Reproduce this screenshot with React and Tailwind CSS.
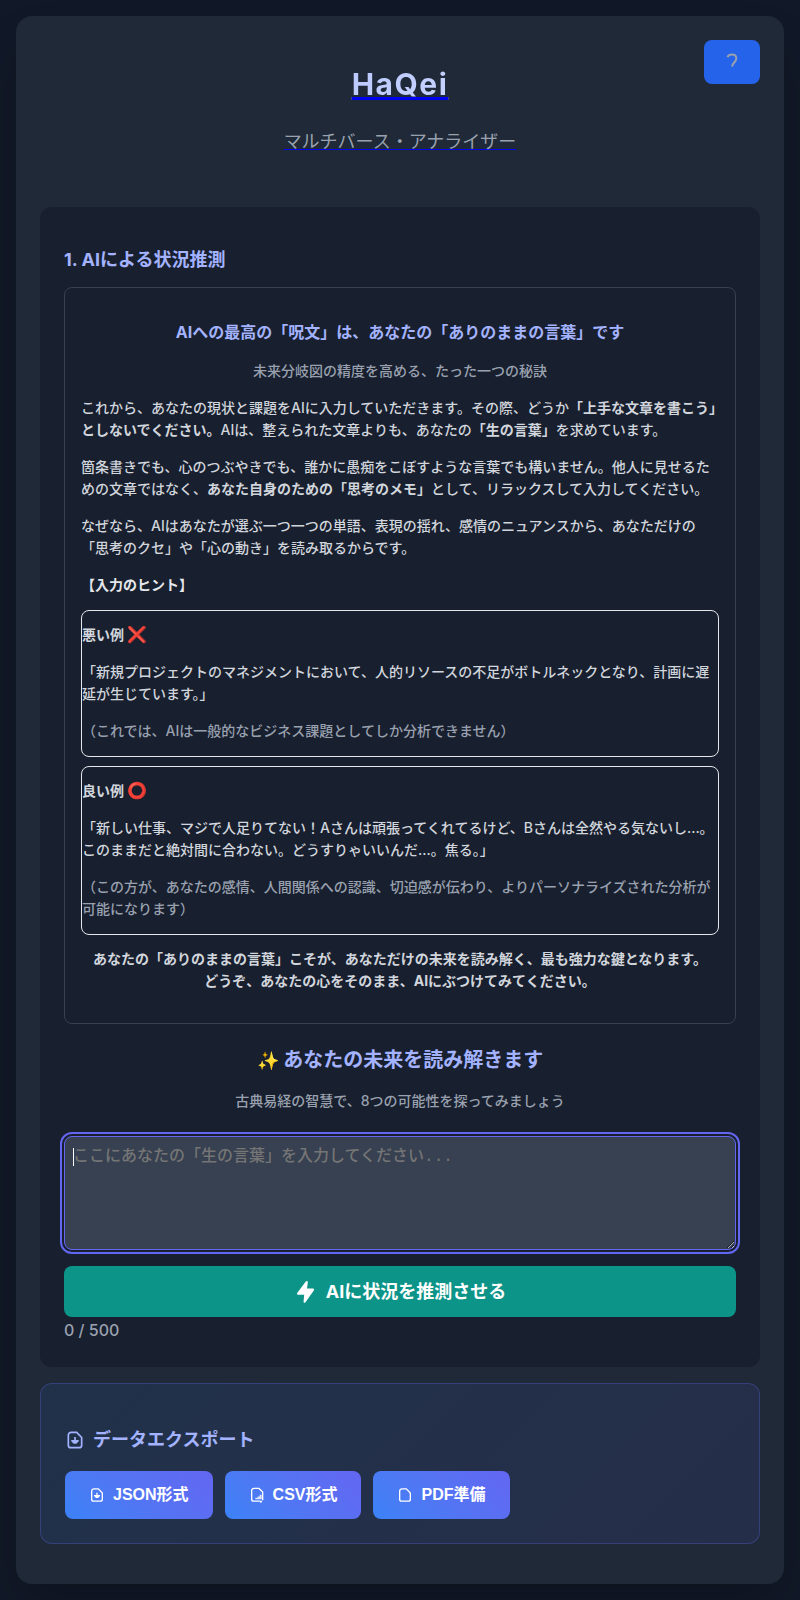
import { useRef, useEffect, useState } from "react";

function Icon({ className, children }) {
  return (
    <svg viewBox="0 0 24 24" fill="currentColor" aria-hidden="true" className={className}>
      {children}
    </svg>
  );
}

const OUTLINE = "M7.5 2.8H14L20 9V18.2a3 3 0 0 1-3 3H7a3 3 0 0 1-3-3v-12a3.400 3.400 0 0 1 3.500-3.400z";

function FileDown({ className }) {
  return (
    <Icon className={className}>
      <path d={OUTLINE} fill="none" stroke="currentColor" strokeWidth="2" />
      <path d="M11 8.500h2V12h3.500v1.500L13.500 16.500h-3L7.500 13.500V12H11z" />
    </Icon>
  );
}

function FileChart({ className }) {
  return (
    <Icon className={className}>
      <path d="M16 21.200H7a3 3 0 0 1-3-3V5.500a3.400 3.400 0 0 1 3.500-3.400H15L20.500 7.500V20" fill="none" stroke="currentColor" strokeWidth="2" />
      <path d="M9.500 18.500v-2.300h3.500v-2h3v-2.400h3v6.700z" fillOpacity="0.8" />
      <path d="M15.500 20.500h4.500l-1.500 3h-1.500z" />
    </Icon>
  );
}

function FileBlank({ className }) {
  return (
    <Icon className={className}>
      <path d={OUTLINE} fill="none" stroke="currentColor" strokeWidth="2" />
    </Icon>
  );
}

function Example({ title, mark, quote, note }) {
  return (
    <div className="flex flex-col gap-[15px] rounded-lg border border-gray-200 pt-[13px] pb-[14px]">
      <p className="font-bold">
        {title} <span className="text-base leading-none">{mark}</span>
      </p>
      <p>{quote}</p>
      <p className="text-gray-400">{note}</p>
    </div>
  );
}

function ExportButton({ icon, children }) {
  return (
    <button
      type="button"
      className="flex h-12 items-center gap-2 rounded-lg bg-linear-45 from-[#3b82f6] to-[#6366f1] px-6 font-['Liberation_Sans','Noto_Sans_CJK_JP',sans-serif] text-base font-bold text-white"
    >
      {icon}
      {children}
    </button>
  );
}

export default function App() {
  const input = useRef(null);
  const [text, setText] = useState("");
  useEffect(() => input.current.focus(), []);

  return (
    <div className="min-h-screen bg-[#111827] p-4 font-[Inter,'Noto_Sans_CJK_JP',sans-serif] text-gray-200">
      <main className="relative rounded-2xl bg-[#1f2937] px-6 pb-10 shadow-2xl">
        <button
          type="button"
          aria-label="ヘルプ"
          className="absolute top-6 right-6 flex h-11 w-14 items-center justify-center rounded-lg bg-[#2563eb] text-gray-400"
        >
          <svg viewBox="0 0 24 24" fill="none" stroke="currentColor" strokeWidth="2" aria-hidden="true" className="size-6">
            <path d="M7.500 7.200C8.300 5.300 10 4.600 12 4.600c2.800 0 4.300 1.500 4.300 3.800 0 3.300-3.800 4.300-4.300 8.200" />
          </svg>
        </button>

        <header className="pt-11 pb-[52px] text-center">
          <a href="/" className="block underline decoration-[#0000ee]">
            <h1 className="bg-linear-135 from-indigo-300 to-indigo-100 bg-clip-text text-3xl leading-[48px] font-bold tracking-wider text-transparent">
              HaQei
            </h1>
            <p className="mt-5 text-lg leading-[27px] text-gray-400">マルチバース・アナライザー</p>
          </a>
        </header>

        <section className="rounded-xl bg-[#181f2e] px-6 pt-[39px] pb-6">
          <h2 className="text-lg leading-7 font-bold text-indigo-300">1. AIによる状況推測</h2>

          <div className="mt-[13px] flex flex-col gap-[15px] rounded-lg border border-gray-700 px-4 pt-[31px] pb-[31px] text-sm leading-[22px] font-medium text-gray-300">
            <h3 className="text-center text-base leading-[26px] font-bold text-indigo-300">
              AIへの最高の「呪文」は、あなたの「ありのままの言葉」です
            </h3>
            <p className="text-center text-gray-400">未来分岐図の精度を高める、たった一つの秘訣</p>
            <p>
              これから、あなたの現状と課題をAIに入力していただきます。その際、どうか
              <strong>「上手な文章を書こう」としないでください。</strong>
              AIは、整えられた文章よりも、あなたの<strong>「生の言葉」</strong>を求めています。
            </p>
            <p>
              箇条書きでも、心のつぶやきでも、誰かに愚痴をこぼすような言葉でも構いません。他人に見せるための文章ではなく、
              <strong>あなた自身のための「思考のメモ」</strong>として、リラックスして入力してください。
            </p>
            <p>
              なぜなら、AIはあなたが選ぶ一つ一つの単語、表現の揺れ、感情のニュアンスから、あなただけの「思考のクセ」や「心の動き」を読み取るからです。
            </p>
            <div>
              <p className="font-bold text-gray-200">【入力のヒント】</p>
              <div className="mt-[14px] flex flex-col gap-[9px]">
                <Example
                  title="悪い例"
                  mark="❌"
                  quote="「新規プロジェクトのマネジメントにおいて、人的リソースの不足がボトルネックとなり、計画に遅延が生じています。」"
                  note="（これでは、AIは一般的なビジネス課題としてしか分析できません）"
                />
                <Example
                  title="良い例"
                  mark="⭕"
                  quote="「新しい仕事、マジで人足りてない！Aさんは頑張ってくれてるけど、Bさんは全然やる気ないし…。このままだと絶対間に合わない。どうすりゃいいんだ…。焦る。」"
                  note="（この方が、あなたの感情、人間関係への認識、切迫感が伝わり、よりパーソナライズされた分析が可能になります）"
                />
              </div>
              <p className="mt-[13px] text-center font-bold">
                あなたの「ありのままの言葉」こそが、あなただけの未来を読み解く、最も強力な鍵となります。
                <br />
                どうぞ、あなたの心をそのまま、AIにぶつけてみてください。
              </p>
            </div>
          </div>

          <label htmlFor="situation" className="mt-5 block text-center text-xl leading-8 font-bold text-indigo-300">
            <span className="text-lg leading-none">✨</span> あなたの未来を読み解きます
          </label>
          <p className="mt-[14px] text-center text-sm leading-[22px] font-medium text-gray-400">
            古典易経の智慧で、8つの可能性を探ってみましょう
          </p>
          <div className="relative mt-6">
            <textarea
              id="situation"
              ref={input}
              value={text}
              maxLength={500}
              onChange={(e) => setText(e.target.value)}
              placeholder="ここにあなたの「生の言葉」を入力してください..."
              className="block h-[114px] w-full rounded-lg border border-[#6366f1] bg-[#374151] p-2 font-['Liberation_Mono','Noto_Sans_CJK_JP',monospace] text-base font-medium text-gray-200 outline-2 outline-offset-2 outline-[#6366f1] placeholder:text-[#757575] placeholder-shown:caret-transparent"
            />
            {text === "" && (
              <span aria-hidden="true" className="pointer-events-none absolute top-3 left-[9px] h-[18px] w-px bg-white" />
            )}
          </div>
          <button
            type="button"
            className="mt-4 flex h-[51px] w-full items-center justify-center gap-2 rounded-lg bg-[#0d9488] text-lg font-bold text-white"
          >
            <Icon className="size-6">
              <path d="M11.600 1.700Q12.400.8 13.200 1.100 14 1.500 13.800 2.500L13 8.500h6Q20.800 8.800 19.800 10.400L11.500 22.200Q10.700 23.200 10 22.700 9.400 22.300 9.600 21.300L10.200 14.800H4Q2.300 14.500 3.200 12.900z" />
            </Icon>
            AIに状況を推測させる
          </button>
          <p className="text-base leading-[26px] font-medium text-gray-400">{text.length} / 500</p>
        </section>

        <section className="mt-4 rounded-xl border border-[#6366f1]/30 bg-linear-135 from-[#3b82f6]/10 to-[#6366f1]/10 px-6 pt-[42px] pb-6">
          <h2 className="flex items-center gap-2 text-lg leading-7 font-bold text-indigo-300">
            <FileDown className="size-5" />
            データエクスポート
          </h2>
          <div className="mt-[17px] flex flex-wrap gap-3">
            <ExportButton icon={<FileDown className="size-4" />}>JSON形式</ExportButton>
            <ExportButton icon={<FileChart className="size-4" />}>CSV形式</ExportButton>
            <ExportButton icon={<FileBlank className="size-4" />}>PDF準備</ExportButton>
          </div>
        </section>
      </main>
    </div>
  );
}
